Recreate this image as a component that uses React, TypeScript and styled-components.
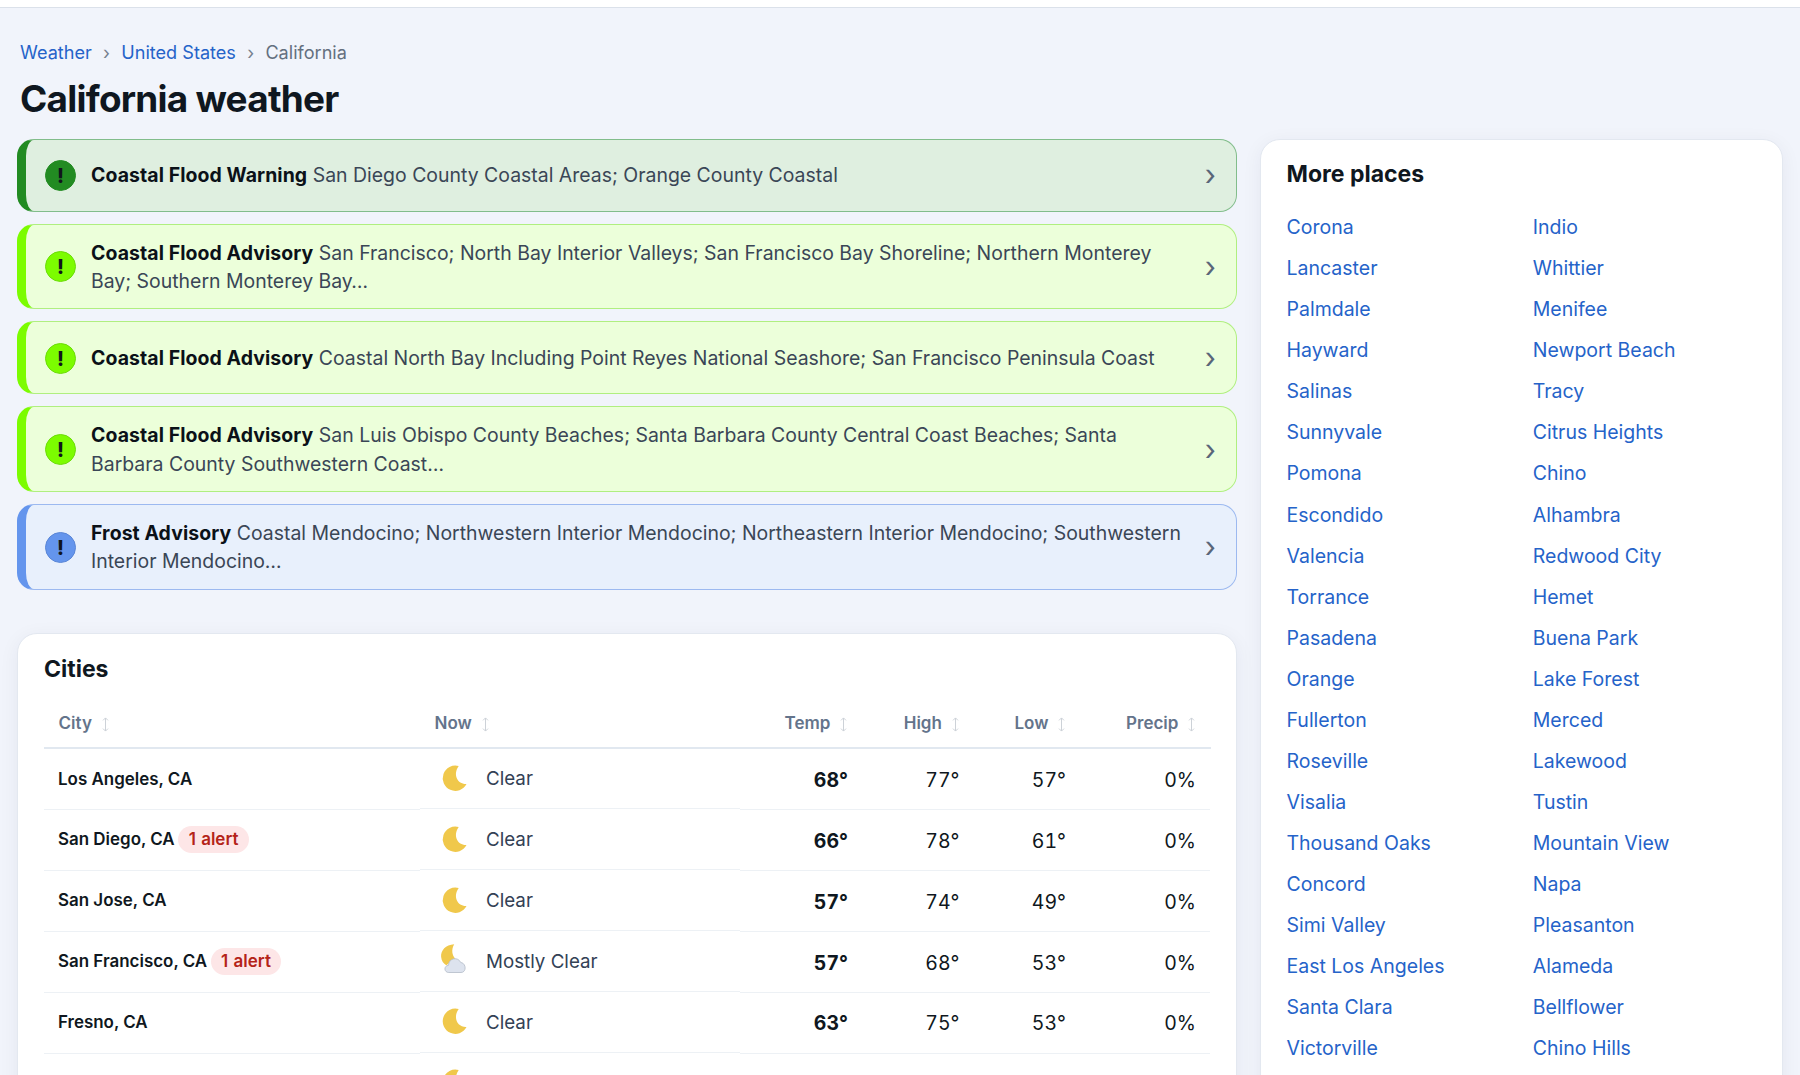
import styled, { createGlobalStyle } from 'styled-components'

type AlertTone = 'warning' | 'advisory' | 'frost'

interface AlertItem {
  title: string
  areas: string
  tone: AlertTone
}

interface CityItem {
  name: string
  alerts?: number
  now: string
  icon: 'moon' | 'moonCloud'
  temp: number
  high: number
  low: number
  precip: number
}

const TONES = {
  warning: { main: '#228b22', bg: '#dfefe0', line: '#82bd8b', ring: '#228b22' },
  advisory: { main: '#7cfc00', bg: '#ecffda', line: '#b0ef80', ring: '#6cdc0a' },
  frost: { main: '#6495ed', bg: '#e8f0fc', line: '#9cb9f0', ring: '#5a86d6' }
}

const ALERTS: AlertItem[] = [
  {
    title: 'Coastal Flood Warning',
    areas: 'San Diego County Coastal Areas; Orange County Coastal',
    tone: 'warning'
  },
  {
    title: 'Coastal Flood Advisory',
    areas:
      'San Francisco; North Bay Interior Valleys; San Francisco Bay Shoreline; Northern Monterey Bay; Southern Monterey Bay…',
    tone: 'advisory'
  },
  {
    title: 'Coastal Flood Advisory',
    areas:
      'Coastal North Bay Including Point Reyes National Seashore; San Francisco Peninsula Coast',
    tone: 'advisory'
  },
  {
    title: 'Coastal Flood Advisory',
    areas:
      'San Luis Obispo County Beaches; Santa Barbara County Central Coast Beaches; Santa Barbara County Southwestern Coast…',
    tone: 'advisory'
  },
  {
    title: 'Frost Advisory',
    areas:
      'Coastal Mendocino; Northwestern Interior Mendocino; Northeastern Interior Mendocino; Southwestern Interior Mendocino…',
    tone: 'frost'
  }
]

const CITIES: CityItem[] = [
  { name: 'Los Angeles, CA', now: 'Clear', icon: 'moon', temp: 68, high: 77, low: 57, precip: 0 },
  { name: 'San Diego, CA', alerts: 1, now: 'Clear', icon: 'moon', temp: 66, high: 78, low: 61, precip: 0 },
  { name: 'San Jose, CA', now: 'Clear', icon: 'moon', temp: 57, high: 74, low: 49, precip: 0 },
  { name: 'San Francisco, CA', alerts: 1, now: 'Mostly Clear', icon: 'moonCloud', temp: 57, high: 68, low: 53, precip: 0 },
  { name: 'Fresno, CA', now: 'Clear', icon: 'moon', temp: 63, high: 75, low: 53, precip: 0 }
]

const PLACES = [
  ['Corona', 'Indio'],
  ['Lancaster', 'Whittier'],
  ['Palmdale', 'Menifee'],
  ['Hayward', 'Newport Beach'],
  ['Salinas', 'Tracy'],
  ['Sunnyvale', 'Citrus Heights'],
  ['Pomona', 'Chino'],
  ['Escondido', 'Alhambra'],
  ['Valencia', 'Redwood City'],
  ['Torrance', 'Hemet'],
  ['Pasadena', 'Buena Park'],
  ['Orange', 'Lake Forest'],
  ['Fullerton', 'Merced'],
  ['Roseville', 'Lakewood'],
  ['Visalia', 'Tustin'],
  ['Thousand Oaks', 'Mountain View'],
  ['Concord', 'Napa'],
  ['Simi Valley', 'Pleasanton'],
  ['East Los Angeles', 'Alameda'],
  ['Santa Clara', 'Bellflower'],
  ['Victorville', 'Chino Hills']
]

const SortIcon = () => (
  <SortSvg width="7" height="15" viewBox="0 0 7 15" fill="none" stroke="currentColor">
    <path d="M3.5 1v13M1 3.4 3.5.9 6 3.4M1 11.6l2.5 2.5L6 11.6" />
  </SortSvg>
)

const MoonIcon = () => (
  <svg width="36" height="36" viewBox="0.5 0.3 36 36">
    <path
      d="M22.2 5.4A12.6 12.6 0 1 0 30 23.4C21.5 23.9 15.8 14.5 22.2 5.4Z"
      fill="#f0c84b"
    />
  </svg>
)

const MoonCloudIcon = () => (
  <svg width="36" height="36" viewBox="1.5 2 36 36">
    <path
      d="M18.7 3.3C10 3.8 5.2 9.5 5.6 15.8C5.9 19.8 8 22.8 10.8 24.2L19.8 17.7C16.5 14.5 15.6 8.6 18.7 3.3Z"
      fill="#f0c84b"
    />
    <path
      d="M13.3 31.5C8.4 31.5 8 24.7 13 24.3C13.3 16.8 22.6 15.4 25.3 21.6C30.6 21.8 31.4 31.5 25.5 31.5Z"
      fill="#dde3ee"
      stroke="#b9c1cd"
      strokeWidth="0.9"
    />
  </svg>
)

const App = () => {
  return (
    <>
      <GlobalStyle />
      <TopBar />
      <Page>
        <Breadcrumb>
          <Crumb href="#">Weather</Crumb>
          <CrumbDivider>›</CrumbDivider>
          <Crumb href="#">United States</Crumb>
          <CrumbDivider>›</CrumbDivider>
          <span>California</span>
        </Breadcrumb>
        <Title>California weather</Title>

        <Columns>
          <MainColumn>
            <AlertList>
              {ALERTS.map(({ title, areas, tone }) => (
                <Alert key={areas} $tone={tone}>
                  <AlertIcon $tone={tone}>!</AlertIcon>
                  <AlertText>
                    <b>{title}</b> {areas}
                  </AlertText>
                  <Chevron>›</Chevron>
                </Alert>
              ))}
            </AlertList>

            <Card>
              <CardTitle>Cities</CardTitle>
              <HeadRow>
                <HeadCell>City <SortIcon /></HeadCell>
                <HeadCell>Now <SortIcon /></HeadCell>
                <HeadCell $right>Temp <SortIcon /></HeadCell>
                <HeadCell $right>High <SortIcon /></HeadCell>
                <HeadCell $right>Low <SortIcon /></HeadCell>
                <HeadCell $right>Precip <SortIcon /></HeadCell>
              </HeadRow>
              {CITIES.map((city) => (
                <Row key={city.name}>
                  <CityCell>
                    {city.name}
                    {city.alerts && <Badge>{city.alerts} alert</Badge>}
                  </CityCell>
                  <NowCell>
                    {city.icon === 'moon' ? <MoonIcon /> : <MoonCloudIcon />}
                    {city.now}
                  </NowCell>
                  <NumberCell $bold>{city.temp}°</NumberCell>
                  <NumberCell>{city.high}°</NumberCell>
                  <NumberCell>{city.low}°</NumberCell>
                  <NumberCell>{city.precip}%</NumberCell>
                </Row>
              ))}
              <Row>
                <CityCell />
                <NowCell>
                  <MoonIcon />
                </NowCell>
              </Row>
            </Card>
          </MainColumn>

          <SideCard>
            <CardTitle>More places</CardTitle>
            <Places>
              {PLACES.flat().map((place) => (
                <Place key={place} href="#">
                  {place}
                </Place>
              ))}
            </Places>
          </SideCard>
        </Columns>
      </Page>
    </>
  )
}

export default App

const GlobalStyle = createGlobalStyle`
  * {
    box-sizing: border-box;
  }
  body {
    margin: 0;
    background-color: #f1f4fb;
    color: #0f1720;
    font-family: Inter, 'Liberation Sans', sans-serif;
    font-size: 19.5px;
  }
  a {
    color: #2563c9;
    text-decoration: none;
  }
`

const TopBar = styled.header`
  height: 8px;
  background-color: #fff;
  border-bottom: 1px solid #dbe1ea;
`

const Page = styled.main`
  height: 1067px;
  padding: 31px 17px 0;
  overflow: hidden;
`

const Breadcrumb = styled.nav`
  display: flex;
  align-items: center;
  height: 26px;
  padding-left: 3px;
  font-size: 18.1px;
  color: #64707f;
`

const Crumb = styled.a``

const CrumbDivider = styled.span`
  width: 29.5px;
  text-align: center;
  color: #76808e;
`

const Title = styled.h1`
  margin: 8px 0 0;
  padding-left: 3px;
  height: 65.5px;
  font-size: 36.9px;
  font-weight: 700;
  line-height: 51px;
  letter-spacing: -0.02em;
`

const Columns = styled.div`
  display: grid;
  grid-template-columns: 1220px 523px;
  column-gap: 23px;
  align-items: start;
`

const MainColumn = styled.div`
  display: flex;
  flex-direction: column;
  gap: 43px;
`

const AlertList = styled.div`
  display: flex;
  flex-direction: column;
  gap: 12px;
`

const Alert = styled.div<{ $tone: AlertTone }>`
  display: flex;
  align-items: center;
  min-height: 73px;
  padding: 14px 20px 13.2px 19px;
  border: 1px solid ${({ $tone }) => TONES[$tone].line};
  border-left: 9px solid ${({ $tone }) => TONES[$tone].main};
  border-radius: 17px;
  background-color: ${({ $tone }) => TONES[$tone].bg};
`

const AlertIcon = styled.span<{ $tone: AlertTone }>`
  flex: none;
  width: 31px;
  height: 31px;
  border: 1px solid ${({ $tone }) => TONES[$tone].ring};
  border-radius: 50%;
  background-color: ${({ $tone }) => TONES[$tone].main};
  color: #10151c;
  font-size: 19.5px;
  font-weight: 800;
  line-height: 31px;
  text-align: center;
`

const AlertText = styled.p`
  flex: 1;
  margin: 0 0 0 15px;
  color: #3a4656;
  font-size: 19.45px;
  line-height: 28.3px;
  b {
    color: #0b1118;
    font-weight: 700;
    letter-spacing: 0.08px;
  }
`

const Chevron = styled.span`
  flex: none;
  margin-left: 14px;
  color: #596679;
  font-size: 29px;
  line-height: 32px;
`

const Card = styled.section`
  height: 520px;
  padding: 20px 25px 0 26px;
  border: 1px solid #e3e8f0;
  border-radius: 20px;
  background-color: #fff;
  box-shadow: 0 4px 20px rgba(20, 30, 60, 0.06);
`

const SideCard = styled(Card)`
  height: 1000px;
  padding-top: 19.6px;
  padding-left: 25.5px;
`

const CardTitle = styled.h2`
  margin: 0;
  font-size: 23px;
  font-weight: 700;
  line-height: 30px;
`

const Row = styled.div`
  display: grid;
  grid-template-columns: 376px 320px 122px 111.5px 106.5px 130px;
  height: 60.9px;
`

const HeadRow = styled(Row)`
  height: 65.6px;
  border-bottom: 2px solid #e1e8f0;
`

const HeadCell = styled.div<{ $right?: boolean }>`
  display: flex;
  align-items: center;
  justify-content: ${({ $right }) => ($right ? 'flex-end' : 'flex-start')};
  padding: 15px 14.6px 0;
  color: #64748b;
  font-size: 17px;
  font-weight: 600;
`

const SortSvg = styled.svg`
  margin: 3px 0 0 10px;
  color: #cdd2d8;
`

const Cell = styled.div`
  display: flex;
  align-items: center;
  padding: 0 14px;
  border-bottom: 1px solid #edf1f5;
`

const CityCell = styled(Cell)`
  padding-bottom: 1.6px;
  font-size: 16.95px;
  font-weight: 600;
`

const Badge = styled.span`
  margin-left: 3.5px;
  padding: 0 10.5px;
  border-radius: 14px;
  background-color: #fde6e7;
  color: #b42318;
  font-size: 17px;
  font-weight: 600;
  line-height: 27px;
  word-spacing: 1px;
`

const NowCell = styled(Cell)`
  height: 59.6px;
  gap: 13px;
  padding-left: 17px;
  color: #334155;
  font-size: 18.75px;
`

const NumberCell = styled(Cell)<{ $bold?: boolean }>`
  justify-content: flex-end;
  padding-top: 1px;
  font-weight: ${({ $bold }) => ($bold ? 700 : 400)};
  font-variant-numeric: tabular-nums;
`

const Places = styled.div`
  display: grid;
  grid-template-columns: 1fr 1fr;
  grid-auto-rows: 41.04px;
  column-gap: 22px;
  align-items: center;
  margin-top: 17.7px;
`

const Place = styled.a`
  line-height: 30px;
`
